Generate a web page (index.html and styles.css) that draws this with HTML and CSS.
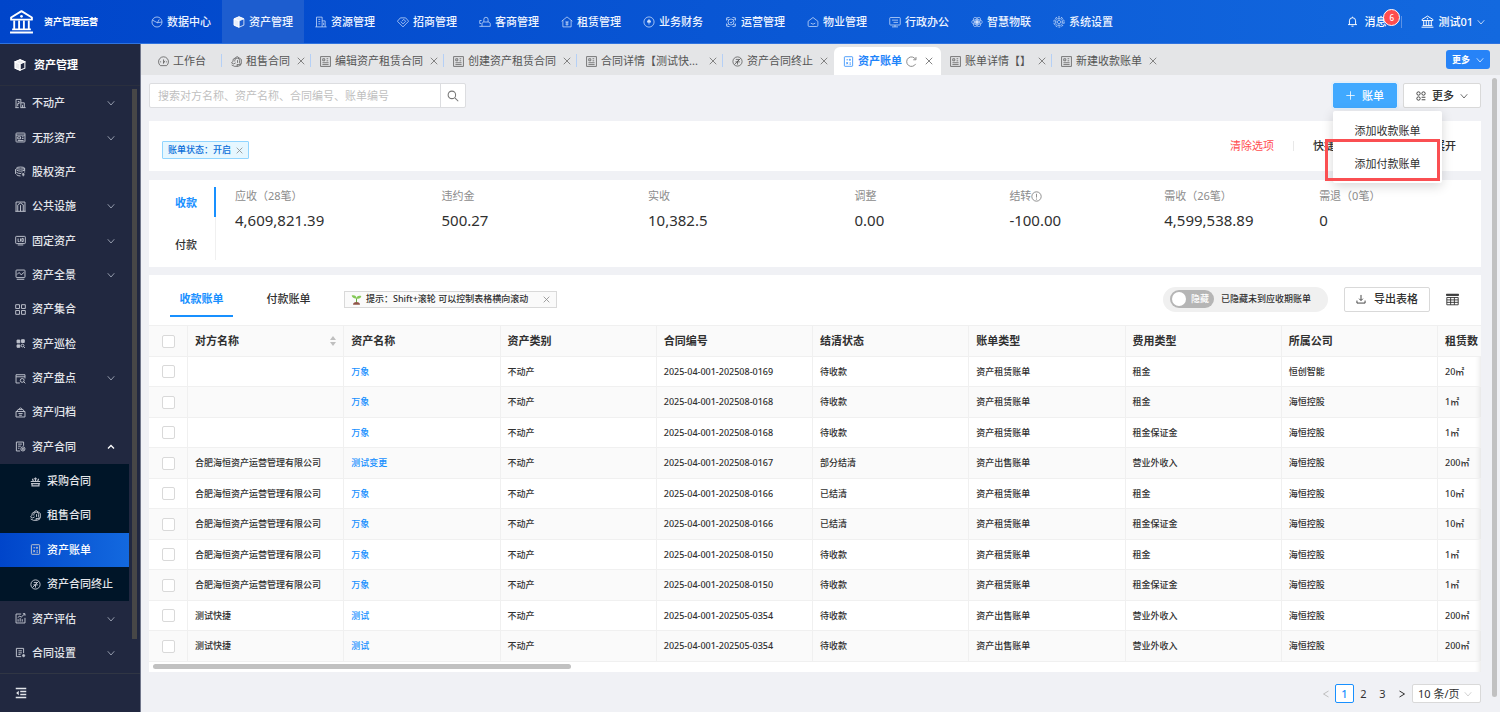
FILE: index.html
```html
<!DOCTYPE html>
<html lang="zh-CN">
<head>
<meta charset="utf-8">
<meta name="viewport" content="width=device-width, initial-scale=1">
<title>资产管理运营</title>
<link rel="stylesheet" href="styles.css">
</head>
<body>
<svg class="sprite" aria-hidden="true">
  <symbol id="bank" viewBox="0 0 24 24"><path d="M2 8.200 12 2l10 6.200v2H2z" fill="none" stroke="currentColor" stroke-width="1.800" stroke-linejoin="round"/><circle cx="12" cy="7" r="1.300" fill="currentColor"/><path d="M5 11v8M9.700 11v8M14.300 11v8M19 11v8M1 22.500h22M3 19.500h18" fill="none" stroke="currentColor" stroke-width="1.800"/></symbol>
  <symbol id="pie" viewBox="0 0 16 16"><circle cx="8" cy="8" r="6.700"/><path d="M2 5.500 8.500 9 14.500 8M8.500 9 11 4.500"/></symbol>
  <symbol id="cube" viewBox="0 0 16 16"><path d="M8 1 14.500 3.800v8.400L8 15 1.500 12.200V3.800z"/><path d="M8 6.500 1.500 3.800v8.400L8 15zM8 1 14.500 3.800 8 6.500 1.500 3.800z" fill="currentColor" fill-opacity=".9"/><path d="M8 6.500V15" /></symbol>
  <symbol id="building" viewBox="0 0 16 16"><path d="M2 14.500v-13h7.500v13M9.500 6.500h4v8M.5 14.500h15M4.500 4.500H7M4.500 7.500H7M4.500 10.500H7M11.500 9v3"/></symbol>
  <symbol id="tag" viewBox="0 0 16 16"><path d="M4.500 2.500h7l4 4.500L8 14.500.5 7zM5 7.500 8 10.500l3.500-3.500L9 4.500 6.500 7"/></symbol>
  <symbol id="customer" viewBox="0 0 16 16"><path d="M6.500 8V4.500a2.800 2.800 0 0 1 5.600 0V8M4 13.800h11v-3c0-1.800-1.200-2.800-3-2.800H7c-1.800 0-3 1-3 2.800zM3.500 6H1v4h2M.5 13.800H4"/></symbol>
  <symbol id="house" viewBox="0 0 16 16"><path d="M.8 7 8 1.200 15.200 7M2.500 5.800v8.700h11V5.800M6 6.500 8 8.500l2-2M6 9h4M8 8.500V13M6 11h4"/></symbol>
  <symbol id="coin" viewBox="0 0 16 16"><circle cx="8" cy="8" r="6.800"/><path d="M8 4.800 10 6.500v1.800H6V6.500zM8 8v3.500" fill="currentColor"/></symbol>
  <symbol id="ops" viewBox="0 0 16 16"><path d="M2 6V3.500Q2 2 3.500 2H6M10 2h2.500Q14 2 14 3.500V6M14 10v2.500q0 1.500-1.500 1.500H10M6 14H3.500Q2 14 2 12.500V10"/><circle cx="8" cy="8" r="4"/><path d="m2 3 3 2.500M14 3l-3 2.500M2 13l3-2.500M14 13l-3-2.500M6.500 8 8 9.500 10 7"/></symbol>
  <symbol id="home" viewBox="0 0 16 16"><path d="M1.500 7 8 2l6.500 5v5.500q0 1.500-1.500 1.500H3q-1.500 0-1.500-1.500zM5 9.500q3 3 6 0"/></symbol>
  <symbol id="monitor" viewBox="0 0 16 16"><rect x="1" y="2" width="14" height="10" rx="1"/><path d="M4 5.500h8M6 8.500h6M8 12v2.500M4 14.500h8"/></symbol>
  <symbol id="atom" viewBox="0 0 16 16"><circle cx="8" cy="8" r="2" fill="currentColor"/><g stroke-width=".8"><ellipse cx="8" cy="8" rx="7" ry="3.200"/><ellipse cx="8" cy="8" rx="7" ry="3.200" transform="rotate(60 8 8)"/><ellipse cx="8" cy="8" rx="7" ry="3.200" transform="rotate(120 8 8)"/></g></symbol>
  <symbol id="gear" viewBox="0 0 16 16"><g stroke-width=".8"><circle cx="8" cy="8" r="6.800" stroke-dasharray="2.600 1.670" stroke-width="1.200"/><circle cx="8" cy="8" r="5"/><circle cx="8" cy="8" r="2.200"/><path d="M8 3v2.800M8 10.200V13M3 8h2.800M10.200 8H13"/></g></symbol>
  <symbol id="bell" viewBox="0 0 16 16"><path d="M1.500 12.500h13M3.500 12.500V7a4.500 4.500 0 0 1 9 0v5.500M8 1v1.500M6.500 14.800h3"/></symbol>
  <symbol id="down" viewBox="0 0 16 16"><path d="m1.500 4.500 6.500 7.500L14.500 4.500"/></symbol>
  <symbol id="up" viewBox="0 0 16 16"><path d="m2 11 6-6 6 6"/></symbol>
  <symbol id="left" viewBox="0 0 16 16"><path d="M13 2 3 8l10 6"/></symbol>
  <symbol id="right" viewBox="0 0 16 16"><path d="m3 2 10 6-10 6"/></symbol>
  <symbol id="close" viewBox="0 0 16 16"><path d="m1.500 1.500 13 13m0-13-13 13"/></symbol>
  <symbol id="gauge" viewBox="0 0 16 16"><path d="M3.500 14a7.200 7.200 0 1 1 9 0zM8 11V5M8 10.500l2-3.500M3 8.500h1.500M11.500 8.500H13"/></symbol>
  <symbol id="rent" viewBox="0 0 16 16"><path d="M3 7.500V5L9 .8 15 5v6.500M5.500 8V6.500a3.500 3.500 0 0 1 7 0V10l2 2.500H8.500M3 7.500.8 10l3 1.500 3-1.500M9 12.500v2.500M1 13l4 2h5l4-1.500M9.500 6v4"/></symbol>
  <symbol id="doc" viewBox="0 0 16 16"><rect x="1" y="1" width="14" height="14"/><path d="M4 4h3v3H4zM9.500 4H12M9.500 7H12M3.500 9.800h9M3.500 12.500h9"/></symbol>
  <symbol id="stop" viewBox="0 0 16 16"><circle cx="8" cy="8" r="6.700"/><path d="M12.500 3.500 3.500 12.500M5.500 5h5L8 8.500M5 8.500h6.500M8 7v5.500"/></symbol>
  <symbol id="bill" viewBox="0 0 16 16"><rect x="2" y="1" width="12" height="14" rx="1"/><path d="M5 5.500h2.500M10 4v3M9 5.500h2.500M5 9l2 3M7 9l-2 3M9.500 10h2M9.500 12h2"/></symbol>
  <symbol id="reload" viewBox="0 0 16 16"><path d="M14 11.500A6.900 6.900 0 1 1 14 5M14.500 1.500V5.500h-4"/></symbol>
  <symbol id="search" viewBox="0 0 16 16"><circle cx="6.500" cy="6.500" r="5"/><path d="m10.500 10.500 4.500 4.500"/></symbol>
  <symbol id="plus" viewBox="0 0 16 16"><path d="M8 .5v15M.5 8h15"/></symbol>
  <symbol id="apps" viewBox="0 0 16 16"><circle cx="4" cy="4" r="2.700"/><circle cx="12" cy="4" r="2.700"/><circle cx="4" cy="12" r="2.700"/><path d="M9 10h6M9 14h6"/></symbol>
  <symbol id="estate" viewBox="0 0 16 16"><path d="M1.500 14V2h7v12M8.500 7h5v7M.5 14h5M8 14h7.500M4 5h2v3H4v4M11 10v4"/></symbol>
  <symbol id="intangible" viewBox="0 0 16 16"><rect x="1.500" y="1.500" width="13" height="13" rx="1"/><path d="M1.500 4.500h13M4 7h4v3H4zM10 7h2.500M10 9.500h2.500M4 12.500h8.500"/></symbol>
  <symbol id="stock" viewBox="0 0 16 16"><path d="M2 3Q3 1.500 8 1.500T14 3t-6 1.500T2 3zM2 5.500Q4 7.500 8 7.500t6-2M2 9q2 2 7 2M2 12.500Q4 14.500 8 14.500M.8 4.500v7M14 3v5M10 9.500l2 2 2-2M12 11.500v3.500M10 12.800h4"/></symbol>
  <symbol id="public" viewBox="0 0 16 16"><path d="M1.500 15V1.500h13V15M4 5.500 8 3l4 2.500V15M4 15V6M8 6v9M.5 15h15"/></symbol>
  <symbol id="fixed" viewBox="0 0 16 16"><rect x="1" y="2" width="14" height="10.500" rx="1"/><path d="M4 14.500h8M4.500 5v4.500h2M8 5v4.500M10 5h2v4.500h-2z"/></symbol>
  <symbol id="view" viewBox="0 0 16 16"><rect x="1.500" y="1.500" width="13" height="11" rx="1"/><path d="m3 8 3-3 3 3.500L13 5M2.500 15h11"/></symbol>
  <symbol id="grid4" viewBox="0 0 16 16"><path d="M1 1h5.500v5.500H1zM9.500 1H15v5.500H9.500zM1 9.500h5.500V15H1zM9.500 9.500H15V15H9.500z"/></symbol>
  <symbol id="inspect" viewBox="0 0 16 16"><path d="M3 3h4v4H3zM9.500 2.500h4v4h-4zM3 10h4v3.500H3z" fill="currentColor"/><circle cx="11" cy="11" r="2"/><path d="m12.500 12.500 2 2"/></symbol>
  <symbol id="stocktake" viewBox="0 0 16 16"><path d="M7 14.500H1.500v-12h13V8M1.500 5.500h13"/><circle cx="10.500" cy="10.800" r="2.800"/><path d="m12.500 12.500 2.500 2.500"/></symbol>
  <symbol id="archive" viewBox="0 0 16 16"><path d="M1.500 6.500h13v8h-13zM2.500 6.500l2-3h7l2 3M5.500 3.500 8 1l2.500 2.500M5 9.500h6M6 12h4"/></symbol>
  <symbol id="contract" viewBox="0 0 16 16"><path d="M7.500 14.500H2v-13h10.500V7M4.500 4.500h5.500M4.500 7.500h4M4.500 10.500h2"/><circle cx="11.500" cy="11.500" r="3"/><path d="M10 11.500h3M11.500 10v3"/></symbol>
  <symbol id="basket" viewBox="0 0 16 16"><path d="M1 8h14M3 11v3.500h10V11M1.500 11h13M5 8 3.500 4M11 8l1.500-4M8 8V2M5.500 4H10" stroke-width="1.800"/></symbol>
  <symbol id="assess" viewBox="0 0 16 16"><path d="M9 1.500H1.500v13h13V7M4.500 12.500V9M7.500 12.500V7.500M10.500 12.500V9M4 6.500l3-2 2 1.500L14.500 1M11.500 1h3v3"/></symbol>
  <symbol id="config" viewBox="0 0 16 16"><path d="M9 14H2V2h10.500v7M5 5.500h5M5 8.500h5M5 11h3"/><circle cx="12.500" cy="12.500" r="1.600" fill="currentColor"/></symbol>
  <symbol id="fold" viewBox="0 0 16 16"><path d="M1 2h14M7 6h8M7 10h8M1 14h14" stroke-width="1.700"/><path d="M5 5v6L1.500 8z" fill="currentColor" stroke="none"/></symbol>
  <symbol id="info" viewBox="0 0 16 16"><circle cx="8" cy="8" r="6.800"/><path d="M8 4v5.500M8 11v1.500"/></symbol>
  <symbol id="download" viewBox="0 0 16 16"><path d="M8 1.500V10M5 7.500l3 3 3-3M1.500 10.500v4h13v-4"/></symbol>
  <symbol id="tableicon" viewBox="0 0 16 16"><path d="M.5 1.500h15V3H.5z" fill="currentColor"/><path d="M1 5.500h14v9H1zM1 8.500h14M1 11.500h14M5.700 5.500v9M10.300 5.500v9"/></symbol>
  <symbol id="sprout" viewBox="0 0 16 16"><path d="M7.300 12V6h1.400v6z" fill="#5fa83c"/><path d="M8 6.500C6 6.500 1.500 5.500 1 2 5 1 8 2.500 8 6.500zM8 6.500c0-3 2.500-4.500 7-3.500C14.500 6.500 11 7.500 8 6.500z" fill="#85c957"/><path d="M3 15.500q0-4 5-4t5 4z" fill="#8f5547"/></symbol>
</svg>

<div class="app">
  <header class="topbar">
    <div class="brand"><svg class="logo"><use href="#bank"/></svg><strong>资产管理运营</strong></div>
    <nav class="topnav" aria-label="主导航">
      <a href="#"><svg class="icon"><use href="#pie"/></svg>数据中心</a>
      <a href="#" class="active"><svg class="icon"><use href="#cube"/></svg>资产管理</a>
      <a href="#"><svg class="icon"><use href="#building"/></svg>资源管理</a>
      <a href="#"><svg class="icon"><use href="#tag"/></svg>招商管理</a>
      <a href="#"><svg class="icon"><use href="#customer"/></svg>客商管理</a>
      <a href="#"><svg class="icon"><use href="#house"/></svg>租赁管理</a>
      <a href="#"><svg class="icon"><use href="#coin"/></svg>业务财务</a>
      <a href="#"><svg class="icon"><use href="#ops"/></svg>运营管理</a>
      <a href="#"><svg class="icon"><use href="#home"/></svg>物业管理</a>
      <a href="#"><svg class="icon"><use href="#monitor"/></svg>行政办公</a>
      <a href="#"><svg class="icon"><use href="#atom"/></svg>智慧物联</a>
      <a href="#"><svg class="icon"><use href="#gear"/></svg>系统设置</a>
    </nav>
    <div class="account">
      <button class="message" type="button"><svg class="icon"><use href="#bell"/></svg>消息<span class="badge">6</span></button>
      <button class="user" type="button"><svg class="bankicon"><use href="#bank"/></svg>测试01<svg class="icon tiny"><use href="#down"/></svg></button>
    </div>
  </header>

  <aside class="sidebar">
    <h1 class="side-title"><svg class="icon"><use href="#cube"/></svg>资产管理</h1>
    <ul class="side-list">
      <li><button type="button"><svg class="icon"><use href="#estate"/></svg>不动产<svg class="icon arrow"><use href="#down"/></svg></button></li>
      <li><button type="button"><svg class="icon"><use href="#intangible"/></svg>无形资产<svg class="icon arrow"><use href="#down"/></svg></button></li>
      <li><a href="#"><svg class="icon"><use href="#stock"/></svg>股权资产</a></li>
      <li><button type="button"><svg class="icon"><use href="#public"/></svg>公共设施<svg class="icon arrow"><use href="#down"/></svg></button></li>
      <li><button type="button"><svg class="icon"><use href="#fixed"/></svg>固定资产<svg class="icon arrow"><use href="#down"/></svg></button></li>
      <li><button type="button"><svg class="icon"><use href="#view"/></svg>资产全景<svg class="icon arrow"><use href="#down"/></svg></button></li>
      <li><a href="#"><svg class="icon"><use href="#grid4"/></svg>资产集合</a></li>
      <li><a href="#"><svg class="icon"><use href="#inspect"/></svg>资产巡检</a></li>
      <li><button type="button"><svg class="icon"><use href="#stocktake"/></svg>资产盘点<svg class="icon arrow"><use href="#down"/></svg></button></li>
      <li><a href="#"><svg class="icon"><use href="#archive"/></svg>资产归档</a></li>
      <li class="group">
        <button type="button" aria-expanded="true"><svg class="icon"><use href="#contract"/></svg>资产合同<svg class="icon arrow open"><use href="#up"/></svg></button>
        <ul class="submenu">
          <li><a href="#"><svg class="icon"><use href="#basket"/></svg>采购合同</a></li>
          <li><a href="#"><svg class="icon"><use href="#rent"/></svg>租售合同</a></li>
          <li><a href="#" class="active"><svg class="icon"><use href="#bill"/></svg>资产账单</a></li>
          <li><a href="#"><svg class="icon"><use href="#stop"/></svg>资产合同终止</a></li>
        </ul>
      </li>
      <li><button type="button"><svg class="icon"><use href="#assess"/></svg>资产评估<svg class="icon arrow"><use href="#down"/></svg></button></li>
      <li><button type="button"><svg class="icon"><use href="#config"/></svg>合同设置<svg class="icon arrow"><use href="#down"/></svg></button></li>
    </ul>
    <span class="side-scroll"></span>
    <button class="fold" type="button" aria-label="收起菜单"><svg class="icon"><use href="#fold"/></svg></button>
  </aside>

  <div class="content">
    <div class="tabs">
      <a href="#" class="tab first"><svg class="icon"><use href="#gauge"/></svg>工作台</a>
      <a href="#" class="tab"><svg class="icon"><use href="#rent"/></svg><span>租售合同</span><svg class="icon x"><use href="#close"/></svg></a>
      <a href="#" class="tab"><svg class="icon"><use href="#doc"/></svg><span>编辑资产租赁合同</span><svg class="icon x"><use href="#close"/></svg></a>
      <a href="#" class="tab"><svg class="icon"><use href="#doc"/></svg><span>创建资产租赁合同</span><svg class="icon x"><use href="#close"/></svg></a>
      <a href="#" class="tab long"><svg class="icon"><use href="#doc"/></svg><span>合同详情【测试快...</span><svg class="icon x"><use href="#close"/></svg></a>
      <a href="#" class="tab plain"><svg class="icon"><use href="#stop"/></svg><span>资产合同终止</span><svg class="icon x"><use href="#close"/></svg></a>
      <a href="#" class="tab current"><svg class="icon"><use href="#bill"/></svg><span>资产账单</span><svg class="icon reload"><use href="#reload"/></svg><svg class="icon x"><use href="#close"/></svg></a>
      <a href="#" class="tab"><svg class="icon"><use href="#doc"/></svg><span>账单详情【】</span><svg class="icon x"><use href="#close"/></svg></a>
      <a href="#" class="tab plain"><svg class="icon"><use href="#doc"/></svg><span>新建收款账单</span><svg class="icon x"><use href="#close"/></svg></a>
      <button class="tabs-more" type="button">更多<svg class="icon tiny"><use href="#down"/></svg></button>
    </div>

    <main class="page">
      <div class="actions">
        <form class="search">
          <input type="text" aria-label="搜索账单" placeholder="搜索对方名称、资产名称、合同编号、账单编号">
          <button type="button" aria-label="搜索"><svg class="icon"><use href="#search"/></svg></button>
        </form>
        <div class="add">
          <button class="btn primary" type="button"><svg class="icon"><use href="#plus"/></svg>账单</button>
          <div class="dropdown">
            <button type="button">添加收款账单</button>
            <button type="button">添加付款账单</button>
            <span class="marker"></span>
          </div>
        </div>
        <button class="btn more" type="button"><svg class="icon"><use href="#apps"/></svg>更多<svg class="icon tiny"><use href="#down"/></svg></button>
      </div>

      <section class="card filters">
        <span class="status">账单状态：开启<button type="button" aria-label="移除"><svg class="icon"><use href="#close"/></svg></button></span>
        <button class="clear" type="button">清除选项</button>
        <span class="quick">快捷</span>
        <button class="expand" type="button">展开</button>
      </section>

      <section class="card stats">
        <div class="side-tabs">
          <button class="on" type="button">收款</button>
          <button type="button">付款</button>
        </div>
        <dl class="figures">
          <div><dt>应收（28笔）</dt><dd>4,609,821.39</dd></div>
          <div><dt>违约金</dt><dd>500.27</dd></div>
          <div><dt>实收</dt><dd>10,382.5</dd></div>
          <div><dt>调整</dt><dd>0.00</dd></div>
          <div><dt>结转<svg class="icon"><use href="#info"/></svg></dt><dd>-100.00</dd></div>
          <div><dt>需收（26笔）</dt><dd>4,599,538.89</dd></div>
          <div><dt>需退（0笔）</dt><dd>0</dd></div>
        </dl>
      </section>

      <section class="card bills">
        <div class="toolbar">
          <button class="bill-tab on" type="button">收款账单</button>
          <button class="bill-tab" type="button">付款账单</button>
          <span class="tip"><svg class="sprout"><use href="#sprout"/></svg>提示：Shift+滚轮 可以控制表格横向滚动<button type="button" aria-label="关闭"><svg class="icon"><use href="#close"/></svg></button></span>
          <label class="hide"><span class="switch"><input type="checkbox" role="switch"><span>隐藏</span></span>已隐藏未到应收期账单</label>
          <button class="btn export" type="button"><svg class="icon"><use href="#download"/></svg>导出表格</button>
          <button class="columns" type="button" aria-label="列设置"><svg class="icon"><use href="#tableicon"/></svg></button>
        </div>
        <div class="table-wrap">
        <table>
          <colgroup><col class="c-check"><col><col><col><col><col><col><col><col><col class="c-last"></colgroup>
          <thead><tr><th><input type="checkbox" aria-label="全选"></th><th><span class="sortable">对方名称<span class="sort"></span></span></th><th>资产名称</th><th>资产类别</th><th>合同编号</th><th>结清状态</th><th>账单类型</th><th>费用类型</th><th>所属公司</th><th>租赁数</th></tr></thead>
          <tbody>
            <tr><td><input type="checkbox" aria-label="选择"></td><td></td><td><a href="#">万象</a></td><td>不动产</td><td>2025-04-001-202508-0169</td><td>待收款</td><td>资产租赁账单</td><td>租金</td><td>恒创智能</td><td>20㎡</td></tr>
            <tr><td><input type="checkbox" aria-label="选择"></td><td></td><td><a href="#">万象</a></td><td>不动产</td><td>2025-04-001-202508-0168</td><td>待收款</td><td>资产租赁账单</td><td>租金</td><td>海恒控股</td><td>1㎡</td></tr>
            <tr><td><input type="checkbox" aria-label="选择"></td><td></td><td><a href="#">万象</a></td><td>不动产</td><td>2025-04-001-202508-0168</td><td>待收款</td><td>资产租赁账单</td><td>租金保证金</td><td>海恒控股</td><td>1㎡</td></tr>
            <tr><td><input type="checkbox" aria-label="选择"></td><td>合肥海恒资产运营管理有限公司</td><td><a href="#">测试变更</a></td><td>不动产</td><td>2025-04-001-202508-0167</td><td>部分结清</td><td>资产出售账单</td><td>营业外收入</td><td>海恒控股</td><td>200㎡</td></tr>
            <tr><td><input type="checkbox" aria-label="选择"></td><td>合肥海恒资产运营管理有限公司</td><td><a href="#">万象</a></td><td>不动产</td><td>2025-04-001-202508-0166</td><td>已结清</td><td>资产租赁账单</td><td>租金</td><td>海恒控股</td><td>10㎡</td></tr>
            <tr><td><input type="checkbox" aria-label="选择"></td><td>合肥海恒资产运营管理有限公司</td><td><a href="#">万象</a></td><td>不动产</td><td>2025-04-001-202508-0166</td><td>已结清</td><td>资产租赁账单</td><td>租金保证金</td><td>海恒控股</td><td>10㎡</td></tr>
            <tr><td><input type="checkbox" aria-label="选择"></td><td>合肥海恒资产运营管理有限公司</td><td><a href="#">万象</a></td><td>不动产</td><td>2025-04-001-202508-0150</td><td>待收款</td><td>资产租赁账单</td><td>租金</td><td>海恒控股</td><td>1㎡</td></tr>
            <tr><td><input type="checkbox" aria-label="选择"></td><td>合肥海恒资产运营管理有限公司</td><td><a href="#">万象</a></td><td>不动产</td><td>2025-04-001-202508-0150</td><td>待收款</td><td>资产租赁账单</td><td>租金保证金</td><td>海恒控股</td><td>1㎡</td></tr>
            <tr><td><input type="checkbox" aria-label="选择"></td><td>测试快捷</td><td><a href="#">测试</a></td><td>不动产</td><td>2025-04-001-202505-0354</td><td>待收款</td><td>资产出售账单</td><td>营业外收入</td><td>海恒控股</td><td>200㎡</td></tr>
            <tr><td><input type="checkbox" aria-label="选择"></td><td>测试快捷</td><td><a href="#">测试</a></td><td>不动产</td><td>2025-04-001-202505-0354</td><td>待收款</td><td>资产出售账单</td><td>营业外收入</td><td>海恒控股</td><td>200㎡</td></tr>
          </tbody>
        </table>
        <div class="hscroll"><span></span></div>
        </div>
      </section>

      <nav class="pager" aria-label="分页">
        <button class="off" type="button" aria-label="上一页"><svg class="icon"><use href="#left"/></svg></button>
        <button class="now" type="button">1</button>
        <button type="button">2</button>
        <button type="button">3</button>
        <button type="button" aria-label="下一页"><svg class="icon"><use href="#right"/></svg></button>
        <label class="size"><select aria-label="每页条数"><option>10 条/页</option></select><svg class="icon"><use href="#down"/></svg></label>
      </nav>
    </main>
    <span class="page-scroll"></span>
  </div>
</div>
</body>
</html>
```

FILE: styles.css
```css
* { box-sizing: border-box; }
body {
  margin: 0;
  font-family: "Noto Sans", "Noto Sans CJK SC", sans-serif;
  font-size: 11px;
  line-height: 16px;
  color: #303030;
  background: #f0f1f5;
}
button, input, select { font: inherit; color: inherit; }
button { margin: 0; padding: 0; border: 0; background: none; white-space: nowrap; cursor: pointer; }
a { color: inherit; text-decoration: none; }
ul, dl, dd, h1 { margin: 0; padding: 0; list-style: none; }
.sprite { position: absolute; width: 0; height: 0; }
.icon { width: 11px; height: 11px; flex: none; fill: none; stroke: currentColor; stroke-width: 1.4; }
.tiny { width: 8px; height: 8px; }

.app {
  display: grid;
  grid-template: 44px 1fr / 141px minmax(0, 1fr);
  min-height: 100vh;
}

/* Top bar */
.topbar {
  grid-column: 1 / -1;
  display: flex;
  align-items: stretch;
  color: #fff;
  font-weight: 500;
  background: linear-gradient(90deg, #0045ca, #1369df);
  border-bottom: 1px solid #2f73df;
}
.brand { width: 140px; flex: none; display: flex; align-items: center; gap: 10px; padding-left: 9px; font-size: 9px; }
.brand strong { font-weight: 700; white-space: nowrap; }
.logo { width: 25px; height: 25px; }
.topnav { display: flex; }
.topnav a { display: flex; align-items: center; gap: 4px; padding: 0 11px; white-space: nowrap; color: #eef4ff; }
.topnav .icon { width: 12px; height: 12px; stroke-width: 1; color: #cfe0fb; }
.topnav a.active { background: #1d5dcf; }
.topnav .active .icon { color: #fff; }
.account { margin-left: auto; display: flex; align-items: center; padding-right: 15px; }
.message { position: relative; display: flex; align-items: center; gap: 6px; padding-right: 15px; border-right: 1px solid #5b92e6; line-height: 12px; }
.badge {
  position: absolute;
  right: 1px;
  top: -7px;
  width: 17px;
  height: 17px;
  border: 1px solid #fff;
  border-radius: 50%;
  background: #ff4d4f;
  font-size: 8px;
  line-height: 15px;
  text-align: center;
}
.user { display: flex; align-items: center; gap: 4px; padding-left: 19px; }
.bankicon { width: 13px; height: 13px; }

/* Side menu */
.sidebar {
  position: relative;
  display: flex;
  flex-direction: column;
  background: #212840;
  border-right: 1px solid #70768a;
  color: #e3e5ea;
  font-weight: 500;
}
.side-title { display: flex; align-items: center; gap: 8px; height: 42px; padding-left: 14px; font-size: 11px; font-weight: 700; color: #fff; border-bottom: 1px solid #2a2f3e; }
.side-title .icon { width: 12px; height: 12px; }
.side-list { flex: 1; display: flex; flex-direction: column; padding-bottom: 3px; margin-right: 11px; }
.side-list li { flex: 1 1 0; min-height: 30px; display: flex; }
.side-list a, .side-list button { flex: 1; display: flex; align-items: center; gap: 6px; padding-left: 15px; }
.side-list .icon { color: #c0c4ce; }
.side-list .arrow { width: 8px; height: 8px; margin: 0 14px 0 auto; stroke-width: 2; color: #9299aa; }
.side-list .open { color: #fff; stroke-width: 2.6; }
.side-list .group { flex-grow: 5; flex-direction: column; }
.side-list .submenu { flex: 4 1 0; display: flex; flex-direction: column; background: #001528; }
.side-list .submenu a { padding-left: 30px; }
.side-list .submenu .active { color: #fff; background: linear-gradient(90deg, #0045ca, #1369df); }
.side-scroll { position: absolute; right: 3px; top: 45px; bottom: 73px; width: 5px; background: #474747; }
.fold { display: flex; align-items: center; height: 39px; padding-left: 15px; border-top: 1px solid #303644; }
.fold .icon { width: 12px; height: 12px; }

/* Open page tabs */
.content { position: relative; min-width: 0; display: flex; flex-direction: column; }
.tabs { display: flex; align-items: flex-end; height: 31px; padding: 0 10px 0 8px; background: #e4e5e7; color: #555; }
.tab { position: relative; display: flex; align-items: center; height: 28px; gap: 4px; padding: 0 6px 0 9px; white-space: nowrap; }
.tab .icon { stroke-width: 1.1; }
.tab .x { width: 8px; height: 8px; margin-left: 3px; color: #777; stroke-width: 1.8; }
.tab::after { content: ""; position: absolute; right: 0; top: 7px; width: 1px; height: 13px; background: #b5d0f6; }
.first { padding-right: 16px; }
.long span { width: 101px; }
.plain::after, .current::after { display: none; }
.current { padding-right: 8px; border-radius: 6px 6px 0 0; background: #fff; color: #1f84fa; font-weight: 700; }
.current .reload { color: #888; stroke-width: 1.4; }
.current .x { margin-left: 4px; }
.tabs-more { align-self: center; display: flex; align-items: center; gap: 6px; height: 19px; padding: 0 6px; margin-left: auto; border-radius: 3px; background: #2783f7; color: #fff; font-size: 9px; font-weight: 700; }

/* Page body */
.page { padding: 8px 19px 9px 8px; }
.page-scroll { position: absolute; right: 3px; top: 34px; bottom: 15px; width: 5px; border-radius: 3px; background: #c1c1c1; }
.actions { display: flex; gap: 6px; height: 25px; margin-bottom: 13px; }
.search { display: flex; width: 317px; margin-right: auto; border: 1px solid #dcdde0; border-radius: 2px; background: #fff; }
.search input { flex: 1; min-width: 0; padding: 0 8px; border: 0; background: none; outline: 0; }
.search input::placeholder { color: #bfbfbf; }
.search button { display: grid; place-items: center; width: 25px; border-left: 1px solid #dcdde0; color: #777; }
.search .icon { width: 12px; height: 12px; }
.btn { display: flex; align-items: center; height: 25px; border: 1px solid #d9d9d9; border-radius: 2px; background: #fff; font-weight: 500; }
.primary { gap: 7px; padding: 0 12px; border-color: #40a9ff; background: #40a9ff; color: #fff; box-shadow: 0 0 0 2px #e4eff9; }
.primary .icon { width: 9px; height: 9px; }
.more { gap: 6px; padding: 0 12px; }
.more .icon:first-child { width: 10px; height: 10px; }
.add { position: relative; }
.dropdown {
  position: absolute;
  z-index: 2;
  left: 0;
  top: 28px;
  display: flex;
  flex-direction: column;
  width: 109px;
  padding: 3px 0;
  border-radius: 2px;
  background: #fff;
  box-shadow: 0 3px 12px rgba(0, 0, 0, .16);
}
.dropdown button { height: 33px; }
.marker { position: absolute; left: -8px; right: 2px; top: 28px; bottom: 2px; border: 3px solid #fa4f52; pointer-events: none; }

.card { background: #fff; }
.filters { display: flex; align-items: center; height: 50px; padding: 0 25px 0 13px; margin-bottom: 9px; }
.status { display: flex; align-items: center; gap: 5px; height: 18px; margin-top: 8px; padding: 0 5px; border: 1px solid #91d5ff; border-radius: 1px; background: #e6f7ff; color: #096dd9; font-size: 9px; font-weight: 500; }
.status button, .tip button { display: flex; color: #888; }
.status .icon, .tip .icon { width: 7px; height: 7px; stroke-width: 1.8; }
.clear { margin-left: auto; padding-right: 19px; color: #ff4d4f; line-height: 10px; border-right: 1px solid #e8e8e8; }
.quick { padding-left: 19px; font-weight: 500; }
.expand { margin-left: 99px; font-weight: 500; }

.stats { display: flex; height: 87px; padding: 7px 7px 7px 0; margin-bottom: 8px; }
.side-tabs { display: flex; flex-direction: column; align-items: stretch; gap: 12px; width: 67px; height: 73px; border-right: 1px solid #f0f0f0; }
.side-tabs button { height: 30px; margin-right: -1px; padding: 2px 0 0 9px; border-right: 2px solid transparent; font-weight: 500; }
.side-tabs .on { color: #1890ff; border-color: #1890ff; font-weight: 700; }
.figures { flex: 1; display: grid; grid-template-columns: 4fr 4fr 4fr 3fr 3fr 3fr 3fr; padding-left: 19px; padding-top: 1px; }
.figures dt { display: flex; align-items: center; color: #8c8c8c; }
.figures dd { margin-top: 5px; font-size: 15px; line-height: 22px; }

.toolbar { display: flex; align-items: center; height: 50px; padding: 0 22px 2px 21px; }
.bill-tab { width: 63px; height: 36px; margin-right: 24px; font-weight: 500; }
.bill-tab.on { color: #1890ff; font-weight: 700; border-bottom: 2px solid #1890ff; border-top: 2px solid transparent; }
.tip { display: flex; align-items: center; height: 17px; padding: 0 6px; border: 1px solid #d9d9d9; background: #fafafa; font-size: 9px; white-space: nowrap; font-weight: 500; }
.sprout { width: 11px; height: 11px; margin-right: 4px; }
.tip button { margin-left: 15px; }
.hide { display: flex; align-items: center; gap: 7px; height: 25px; margin-left: auto; padding: 0 17px 0 7px; border-radius: 13px; background: #f0f0f0; font-size: 9px; font-weight: 500; }
.switch { display: flex; align-items: center; gap: 5px; width: 44px; height: 18px; padding: 0 2px; border-radius: 9px; background: #b5b5b5; color: #fff; }
.switch input { appearance: none; width: 14px; height: 14px; margin: 0; border-radius: 50%; background: #fff; }
.export { gap: 8px; padding: 0 11px; margin: 0 16px; }
.export .icon { width: 10px; height: 10px; }
.columns { display: flex; }
.columns .icon { width: 13px; height: 13px; stroke-width: 1.1; }

/* Table */
.table-wrap { box-shadow: inset -6px 0 6px -6px rgba(0, 0, 0, .15); }
table { width: 100%; table-layout: fixed; border-collapse: separate; border-spacing: 0; font-size: 9px; line-height: 14px; }
.c-check { width: 39px; }
.c-last { width: 43px; }
th, td { height: 31px; padding: 0 7px; border-right: 1px solid #f0f0f0; border-bottom: 1px solid #f0f0f0; text-align: left; white-space: nowrap; font-weight: 500; }
th { height: 32px; font-size: 11px; font-weight: 700; background: #fafafa; border-top: 1px solid #f0f0f0; }
th:last-child, td:last-child { padding-right: 0; border-right: 0; }
tbody tr:nth-child(odd) td { height: 30px; }
tbody tr:nth-child(even) { background: rgba(0, 0, 0, .02); }
td a { color: #1890ff; }
th:first-child, td:first-child { padding: 0; text-align: center; }
td input, th input { appearance: none; display: block; width: 13px; height: 13px; margin: 0 auto; border: 1px solid #d9d9d9; border-radius: 2px; background: #fff; }
.sortable { display: flex; align-items: center; justify-content: space-between; }
.sort { display: grid; gap: 2px; }
.sort::before, .sort::after { content: ""; border: 3px solid transparent; }
.sort::before { border-bottom: 4px solid #bfbfbf; border-top: 0; }
.sort::after { border-top: 4px solid #bfbfbf; border-bottom: 0; }
.hscroll { padding: 2px 4px 3px; }
.hscroll span { display: block; width: 31.6%; height: 5px; border-radius: 3px; background: #c1c1c1; }

/* Pagination */
.pager { display: flex; align-items: center; justify-content: flex-end; height: 19px; margin-top: 12px; }
.pager button { display: grid; place-items: center; width: 19px; height: 19px; }
.pager .icon { width: 8px; height: 8px; stroke-width: 2; }
.pager .off { color: #bfbfbf; }
.pager .now { border: 1px solid #1890ff; border-radius: 2px; background: #fff; color: #1890ff; font-weight: 500; }
.size { position: relative; margin-left: 1px; }
.size select { appearance: none; width: 69px; height: 19px; padding: 0 5px; border: 1px solid #d9d9d9; border-radius: 2px; background: #fff; }
.pager .size .icon { position: absolute; right: 9px; top: 6px; stroke-width: 1.4; color: #bfbfbf; }
```
